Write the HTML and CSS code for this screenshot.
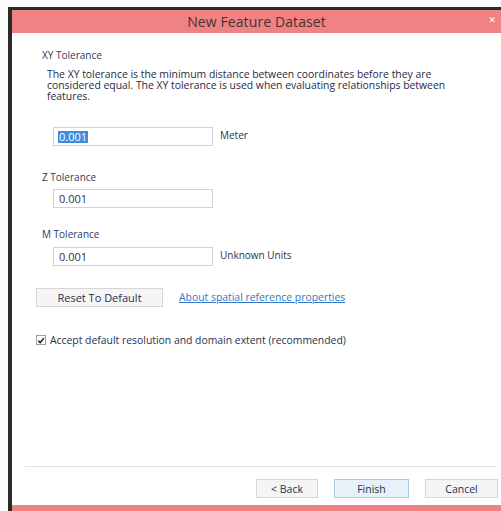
FILE: index.html
```html
<!DOCTYPE html>
<html lang="en">
<head>
<meta charset="utf-8">
<title>New Feature Dataset</title>
<link rel="stylesheet" href="styles.css">
</head>
<body>
<div class="page">
  <div class="window">
    <div class="titlebar">
      <span class="title">New Feature Dataset</span>
      <span class="close">&#x2715;</span>
    </div>
    <div class="content">
      <div class="label xy-label">XY Tolerance</div>
      <p class="desc">The XY tolerance is the minimum distance between coordinates before they are considered equal. The XY tolerance is used when evaluating relationships between features.</p>
      <div class="field-row first-row">
        <div class="input"><span class="selected">0.001</span></div>
        <span class="unit">Meter</span>
      </div>

      <div class="label z-label">Z Tolerance</div>
      <div class="field-row">
        <div class="input">0.001</div>
      </div>

      <div class="label m-label">M Tolerance</div>
      <div class="field-row">
        <div class="input">0.001</div>
        <span class="unit">Unknown Units</span>
      </div>

      <div class="actions-row">
        <button class="btn reset">Reset To Default</button>
        <a class="link" href="#">About spatial reference properties</a>
      </div>

      <label class="check-row">
        <span class="checkbox">
          <svg viewBox="0 0 10 10" width="9" height="9"><path d="M1.5 5.2 L4 7.6 L8.6 2" fill="none" stroke="#1a1a1a" stroke-width="1.8"/></svg>
        </span>
        <span>Accept default resolution and domain extent (recommended)</span>
      </label>

      <div class="spacer"></div>
    </div>
    <div class="footer">
      <div class="separator"></div>
      <div class="buttons">
        <button class="btn">&lt; Back</button>
        <button class="btn primary">Finish</button>
        <button class="btn cancel">Cancel</button>
      </div>
    </div>
    <div class="bottom-bar"></div>
  </div>
</div>
</body>
</html>
```
FILE: styles.css
```css
html, body {
  margin: 0;
  padding: 0;
  height: 100%;
  background: #fbfbfb;
}

body {
  font-family: "Open Sans", "DejaVu Sans", sans-serif;
  color: #25324c;
  overflow: hidden;
}

.page {
  height: 100%;
  padding: 7px 0 0 8px;
  box-sizing: border-box;
}

.window {
  height: 100%;
  display: flex;
  flex-direction: column;
  border-left: 4px solid #2a2a2a;
  border-top: 3px solid #2a2a2a;
  background: #ffffff;
  box-sizing: border-box;
}

.titlebar {
  height: 23px;
  background: #ef8282;
  display: flex;
  align-items: center;
  justify-content: center;
  position: relative;
  flex-shrink: 0;
}

.title {
  font-size: 14px;
  color: #473232;
  letter-spacing: 0.1px;
}

.close {
  position: absolute;
  right: 5px;
  top: 3px;
  font-size: 9px;
  color: #ffffff;
  font-weight: bold;
}

.content {
  flex: 1;
  display: flex;
  flex-direction: column;
  padding: 0 0 0 30px;
  font-size: 10.4px;
}

.label {
  color: #2b3c5e;
  line-height: 12px;
  font-size: 10px;
}

.xy-label { margin-top: 16px; }

.desc {
  margin: 8px 0 0 5px;
  width: 400px;
  line-height: 11px;
  color: #1f2b45;
}

.field-row {
  display: flex;
  align-items: center;
  gap: 7px;
  margin-left: 11px;
}

.first-row { margin-top: 25px; }

.input {
  width: 160px;
  height: 19px;
  box-sizing: border-box;
  border: 1px solid #cfd3d9;
  padding: 0 5px;
  display: flex;
  align-items: center;
  color: #2a3550;
  background: #fff;
  font-size: 11px;
}

.selected {
  background: #3f8de0;
  color: #ffffff;
  padding: 0 1px;
  margin-left: -1px;
  line-height: 12px;
}

.unit {
  color: #2b3550;
  margin-top: -4px;
  font-size: 10px;
}

.z-label { margin-top: 25px; }
.m-label { margin-top: 20px; }
.z-label + .field-row { margin-top: 6px; }
.m-label + .field-row { margin-top: 7px; }

.actions-row {
  display: flex;
  align-items: center;
  gap: 16px;
  margin: 22px 0 0 -6px;
}

.btn {
  font-family: inherit;
  font-size: 10.5px;
  color: #26304a;
  background: #f5f5f5;
  border: 1px solid #d6d6d6;
  height: 19px;
  padding: 0;
  box-sizing: border-box;
}

.reset { width: 127px; font-size: 11px; }

.link {
  color: #2f79c9;
  text-decoration: underline;
  margin-top: -1px;
}

.check-row {
  display: flex;
  align-items: center;
  gap: 4px;
  margin: 26px 0 0 -6px;
  color: #26324d;
}

.checkbox {
  width: 10px;
  height: 10px;
  border: 1px solid #9aa0a8;
  box-sizing: border-box;
  display: flex;
  align-items: center;
  justify-content: center;
  background: #fff;
}

.spacer { flex: 1; }

.footer {
  flex-shrink: 0;
  display: flex;
  flex-direction: column;
}

.separator {
  height: 1px;
  background: #dfe2e6;
  margin: 0 5px 0 13px;
}

.buttons {
  display: flex;
  justify-content: flex-end;
  gap: 16px;
  padding: 12px 3px 7px 0;
}

.buttons .btn {
  width: 62px;
  height: 19px;
}

.buttons .primary {
  width: 75px;
  background: #e7f1fa;
  border-color: #a9cbe9;
}

.buttons .cancel { width: 73px; }

.bottom-bar {
  height: 6px;
  background: #ef8282;
  flex-shrink: 0;
}
```
